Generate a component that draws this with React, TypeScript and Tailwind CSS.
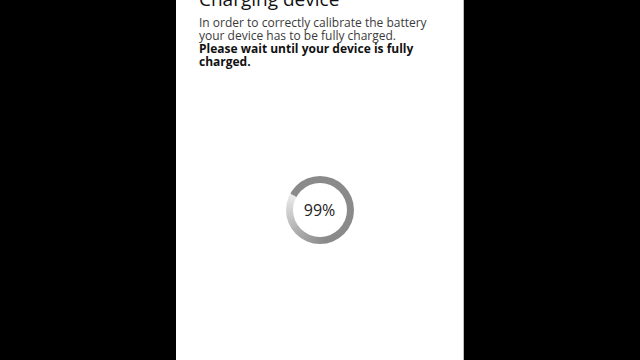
import React from 'react';

export default function App() {
  return (
    <div className="w-[640px] h-[360px] bg-black flex justify-center overflow-hidden">
      <div
        className="w-[288px] h-full bg-white border-r border-[#bdbdbd] flex flex-col pl-[23px] pr-4"
        style={{ fontFamily: '"Open Sans", "Noto Sans", sans-serif' }}
      >
        <h1 className="mt-[-12px] text-[19px] leading-[22px] text-[#111]">Charging device</h1>
        <p className="mt-[6px] text-[12px] leading-[13px] text-[#3a3a3a]">
          In order to correctly calibrate the battery your device has to be fully charged.
        </p>
        <p className="text-[12px] leading-[13px] font-bold text-[#111]">
          Please wait until your device is fully charged.
        </p>

        {/* progress ring */}
        <div className="flex justify-center mt-[108px] pr-[7px]">
          <div className="w-[68px] h-[68px] rounded-full flex items-center justify-center bg-[conic-gradient(#8a8a8a_0deg,#8a8a8a_170deg,#a8a8a8_220deg,#d2d2d2_270deg,#ebebeb_298deg,#8a8a8a_300deg)]">
            <div className="w-[54px] h-[54px] rounded-full bg-white flex items-center justify-center text-[16px] text-[#222]">
              99%
            </div>
          </div>
        </div>
      </div>
    </div>
  );
}
